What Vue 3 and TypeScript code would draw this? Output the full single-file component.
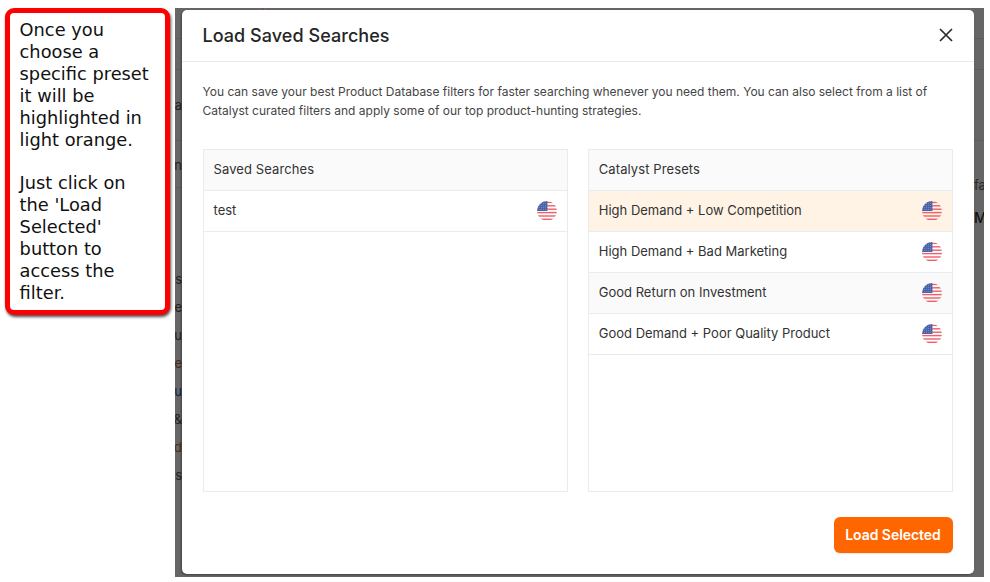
<script setup lang="ts">
const saved = [{ name: 'test', cls: '' }]
const presets = [
  { name: 'High Demand + Low Competition', cls: 'active' },
  { name: 'High Demand + Bad Marketing', cls: '' },
  { name: 'Good Return on Investment', cls: 'alt' },
  { name: 'Good Demand + Poor Quality Product', cls: '' },
]
const panels = [
  { title: 'Saved Searches', rows: saved },
  { title: 'Catalyst Presets', rows: presets },
]
const stripes = [1.4, 4.8, 8.2, 11.6, 15, 18.3]
const slivers = [
  { text: 'ta', top: 97, cls: '' },
  { text: 'n', top: 157, cls: '' },
  { text: 's', top: 271, cls: '' },
  { text: 'oe', top: 299, cls: '' },
  { text: 'ou', top: 327, cls: '' },
  { text: 'ne', top: 355, cls: 'brown' },
  { text: 'u', top: 383, cls: 'navy' },
  { text: '&', top: 411, cls: '' },
  { text: 'd', top: 439, cls: 'brown' },
  { text: 'es', top: 467, cls: '' },
]
</script>

<template>
  <div class="page">
    <aside class="callout">
      <p>Once you choose a specific preset it will be highlighted in light orange.</p>
      <p>Just click on the 'Load Selected' button to access the filter.</p>
    </aside>

    <div class="backdrop">
      <i class="line" style="top: 30px"></i>
      <i class="line" style="top: 61px"></i>
      <i class="line" style="top: 132px"></i>
      <i class="line" style="top: 179px"></i>
      <span class="top-crumb">Database <em>Help</em></span>
      <span v-for="s in slivers" :key="s.top" class="sliver" :class="s.cls" :style="{ top: s.top - 8 + 'px' }">{{ s.text }}</span>
      <span class="sliver right" style="top: 169px">fa</span>
      <span class="sliver right strong" style="top: 202px">M</span>

      <section class="modal">
        <header class="modal-head">
          <h2>Load Saved Searches</h2>
          <svg class="close" width="16" height="16" viewBox="0 0 16 16" aria-label="Close">
            <path d="M2 2 L14 14 M14 2 L2 14" stroke="#2b2b2b" stroke-width="1.7" fill="none" />
          </svg>
        </header>

        <div class="modal-body">
          <p class="desc">You can save your best Product Database filters for faster searching whenever you need them. You can also select from a list of Catalyst curated filters and apply some of our top product-hunting strategies.</p>

          <div class="panels">
            <div v-for="panel in panels" :key="panel.title" class="panel">
              <div class="panel-head">{{ panel.title }}</div>
              <div v-for="row in panel.rows" :key="row.name" class="row" :class="row.cls">
                <span class="row-name">{{ row.name }}</span>
                <svg class="flag" width="20" height="20" viewBox="0 0 20 20">
                  <defs>
                    <clipPath id="flag-circle"><circle cx="10" cy="10" r="10" /></clipPath>
                    <pattern id="flag-stars" width="2" height="2" patternUnits="userSpaceOnUse">
                      <rect width="2" height="2" fill="#4a62a8" />
                      <rect width="0.8" height="0.8" fill="#8a9ccb" />
                    </pattern>
                  </defs>
                  <g clip-path="url(#flag-circle)">
                    <rect v-for="(y, i) in stripes" :key="i" x="0" :y="y - 0.7" width="20" height="1.4" fill="#ef5f69" />
                    <rect x="0" y="0" width="10.5" height="10" fill="url(#flag-stars)" />
                  </g>
                </svg>
              </div>
            </div>
          </div>
        </div>

        <footer class="modal-foot">
          <button type="button" class="load">Load Selected</button>
        </footer>
      </section>
    </div>
  </div>
</template>

<style>
html, body { margin: 0; background: #fff; }
</style>

<style scoped>
.page {
  width: 990px;
  height: 582px;
  box-sizing: border-box;
  padding: 8px 6px 5px 5px;
  display: flex;
  align-items: flex-start;
  gap: 5px;
  overflow: hidden;
  background: #fff;
}
.callout {
  width: 165px;
  height: 307px;
  flex: none;
  box-sizing: border-box;
  padding: 6px 8px 0 9.6px;
  background: #fff;
  border: 5px solid #fe0000;
  border-radius: 9px;
  box-shadow: 1px 2px 3px rgba(0, 0, 0, 0.7);
  font: 17.8px/22px "DejaVu Sans", sans-serif;
  color: #111;
}
.callout p { margin: 0 0 21px; }
.backdrop {
  position: relative;
  flex: 1;
  align-self: stretch;
  background: #666;
  padding: 2px 10px 3px 7px;
  display: flex;
  overflow: hidden;
}
.line {
  position: absolute;
  left: 0;
  right: 0;
  height: 1px;
  background: #5c5c5c;
}
.top-crumb {
  position: absolute;
  left: 3px;
  top: -12px;
  font: 700 11.5px/16px Inter, sans-serif;
  color: #111;
  white-space: nowrap;
}
.top-crumb em {
  font-style: normal;
  font-weight: 500;
  color: #a8501a;
  margin-left: 10px;
}
.sliver {
  position: absolute;
  left: 0;
  width: 7px;
  overflow: hidden;
  font: 13px/16px Inter, sans-serif;
  color: #222;
  direction: rtl;
}
.sliver.brown { color: #4a2c14; }
.sliver.navy { color: #14204a; }
.sliver.right { left: auto; right: 0; width: 10px; direction: ltr; color: #2a2a2a; }
.sliver.strong { font-size: 14px; font-weight: 500; color: #111; }
.modal {
  position: relative;
  flex: 1;
  display: flex;
  flex-direction: column;
  background: #fff;
  border-radius: 5px;
  box-shadow: -1px 1px 2px rgba(0, 0, 0, 0.35);
  font-family: Inter, sans-serif;
  color: #2b2b2b;
}
.modal-head {
  height: 51px;
  flex: none;
  display: flex;
  align-items: center;
  justify-content: space-between;
  padding: 0 20px 0 20.5px;
  border-bottom: 1px solid #e9ecef;
}
.close { margin-top: -2px; }
.modal-head h2 {
  margin: 0;
  font-size: 18px;
  font-weight: 500;
  letter-spacing: 0.05px;
  color: #252525;
}
.modal-body {
  flex: 1;
  display: flex;
  flex-direction: column;
  padding: 20px 21px 0 20.5px;
  min-height: 0;
}
.desc {
  margin: 0 0 29px;
  font-size: 12px;
  line-height: 19px;
  color: #454545;
}
.panels {
  height: 343px;
  display: grid;
  grid-template-columns: 1fr 1fr;
  gap: 20px;
}
.panel {
  border: 1px solid #e9ecef;
  display: flex;
  flex-direction: column;
}
.panel-head {
  height: 41px;
  flex: none;
  box-sizing: border-box;
  display: flex;
  align-items: center;
  padding: 0 10px 3px;
  background: #fafafa;
  border-bottom: 1px solid #e9ecef;
  font-size: 13px;
  letter-spacing: 0.1px;
  color: #333;
}
.row {
  height: 41px;
  flex: none;
  box-sizing: border-box;
  display: flex;
  align-items: center;
  justify-content: space-between;
  padding: 0 10px;
  border-bottom: 1px solid #e9ecef;
  font-size: 13px;
  color: #333;
}
.row-name { margin-top: -2px; }
.row.active { background: #fff3e6; }
.row.alt { background: #fafafa; }
.modal-foot {
  height: 82px;
  flex: none;
  box-sizing: border-box;
  padding: 25px 21px 0;
  display: flex;
  justify-content: flex-end;
  align-items: flex-start;
}
.load {
  width: 119px;
  height: 36px;
  border: none;
  border-radius: 6px;
  background: #ff6600;
  color: #fff;
  font: 600 14px Inter, sans-serif;
  letter-spacing: -0.05px;
  line-height: 34px;
  padding: 0 1px 0 0;
  box-shadow: 0 1px 1px rgba(0, 0, 0, 0.1);
}
</style>
